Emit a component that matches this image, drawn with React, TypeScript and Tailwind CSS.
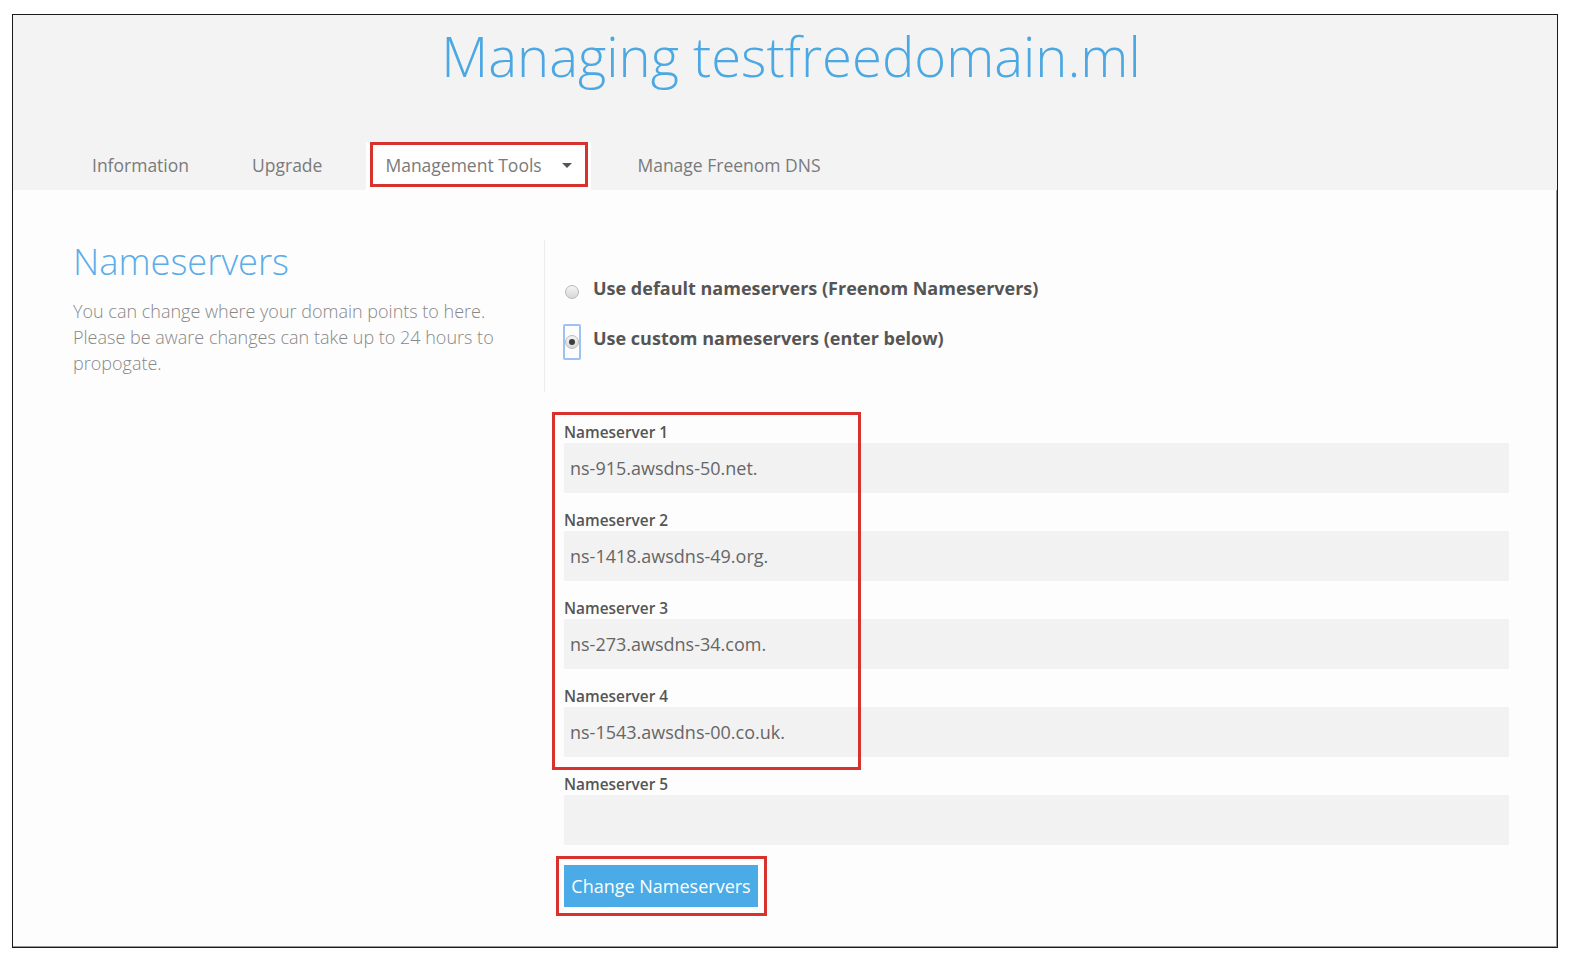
import React from 'react';

const font = { fontFamily: '"Open Sans", "Liberation Sans", sans-serif' };

const servers = [
  'ns-915.awsdns-50.net.',
  'ns-1418.awsdns-49.org.',
  'ns-273.awsdns-34.com.',
  'ns-1543.awsdns-00.co.uk.',
  '',
];

const Radio: React.FC<{ checked?: boolean; focused?: boolean }> = ({ checked, focused }) => (
  <span className="relative ml-[1px] mt-[10px] flex h-[14px] w-[14px] shrink-0 items-center justify-center rounded-full border border-[#b9b9b9] bg-gradient-to-b from-[#f4f4f4] to-[#d8d8d8]">
    {checked && <span className="h-[6px] w-[6px] rounded-full bg-[#3d3d3d]" />}
    {focused && (
      <span className="absolute -left-[3px] -top-[12px] h-[36px] w-[18px] rounded-[2px] border-2 border-[#9dc1f2]" />
    )}
  </span>
);

const App: React.FC = () => {
  return (
    <div className="min-h-screen bg-white pl-[12px] pt-[14px]" style={font}>
      <div className="h-[934px] w-[1546px] border border-[#1a1a1a] bg-[#fdfdfd] shadow-[inset_-1px_-1px_0_#9a9a9a]">
        {/* header */}
        <div className="h-[175px] bg-[#f3f3f3] pt-[9px]">
          <h1 className="pl-[12px] text-center text-[54.4px] font-light leading-[64px] text-[#4ba8e2]">
            Managing testfreedomain.ml
          </h1>
          <nav className="mt-[54px] flex h-[48px] items-start pl-[79px] text-[17.5px] text-[#7a7a7a]">
            <a className="flex h-[45px] items-center pt-[2px]">Information</a>
            <a className="ml-[63px] flex h-[45px] items-center pt-[2px]">Upgrade</a>
            <div className="ml-[44px] h-[48px] bg-white px-[4px] pr-[3px]">
              <div className="flex h-[45px] w-[218px] items-center border-[3px] border-[#d8322f] pl-[12px] pt-[2px]">
                <span>Management Tools</span>
                <span className="ml-[20px] h-0 w-0 border-x-[5px] border-t-[5px] border-x-transparent border-t-[#555]" />
              </div>
            </div>
            <a className="ml-[46px] flex h-[45px] items-center pt-[2px]">Manage Freenom DNS</a>
          </nav>
        </div>

        {/* content */}
        <div className="flex items-start pt-[50px]">
          <div className="w-[532px] border-r border-[#ececec] pb-[16px] pl-[60px] pr-[30px]">
            <h2 className="text-[36.3px] font-light leading-[42px] text-[#5badea]">Nameservers</h2>
            <p className="mt-[16px] text-[18px] font-light leading-[26px] text-[#888]">
              You can change where your domain points to here.
              <br />
              Please be aware changes can take up to 24 hours to propogate.
            </p>
          </div>

          <div className="pl-[19px] pt-[35px]">
            <label className="flex h-[26px] items-start">
              <Radio />
              <span className="ml-[14px] text-[18px] font-bold leading-[26px] text-[#555]">
                Use default nameservers (Freenom Nameservers)
              </span>
            </label>
            <label className="mt-[24px] flex h-[26px] items-start">
              <Radio checked focused />
              <span className="ml-[14px] text-[18px] font-bold leading-[26px] text-[#555]">
                Use custom nameservers (enter below)
              </span>
            </label>

            <div className="relative mt-[70px] w-[945px]">
              {servers.map((value, i) => (
                <div key={i} className="mb-[16px]">
                  <div className="pt-[2px] text-[15.4px] font-semibold leading-[20px] text-[#555]">
                    Nameserver {i + 1}
                  </div>
                  <div className="flex h-[50px] items-center bg-[#f2f2f2] pl-[6px] text-[18px] text-[#666]">
                    {value}
                  </div>
                </div>
              ))}
              {/* annotation box */}
              <div className="pointer-events-none absolute -left-[12px] -top-[9px] h-[358px] w-[309px] border-[3px] border-[#d8322f]" />

              <div className="-ml-[8px] -mt-[5px] inline-block border-[3px] border-[#d8322f] pb-[6px] pl-[5px] pr-[6px] pt-[6px]">
                <button className="h-[42px] w-[194px] bg-[#4aabe6] text-[18px] text-white">
                  Change Nameservers
                </button>
              </div>
            </div>
          </div>
        </div>
      </div>
    </div>
  );
};

export default App;
